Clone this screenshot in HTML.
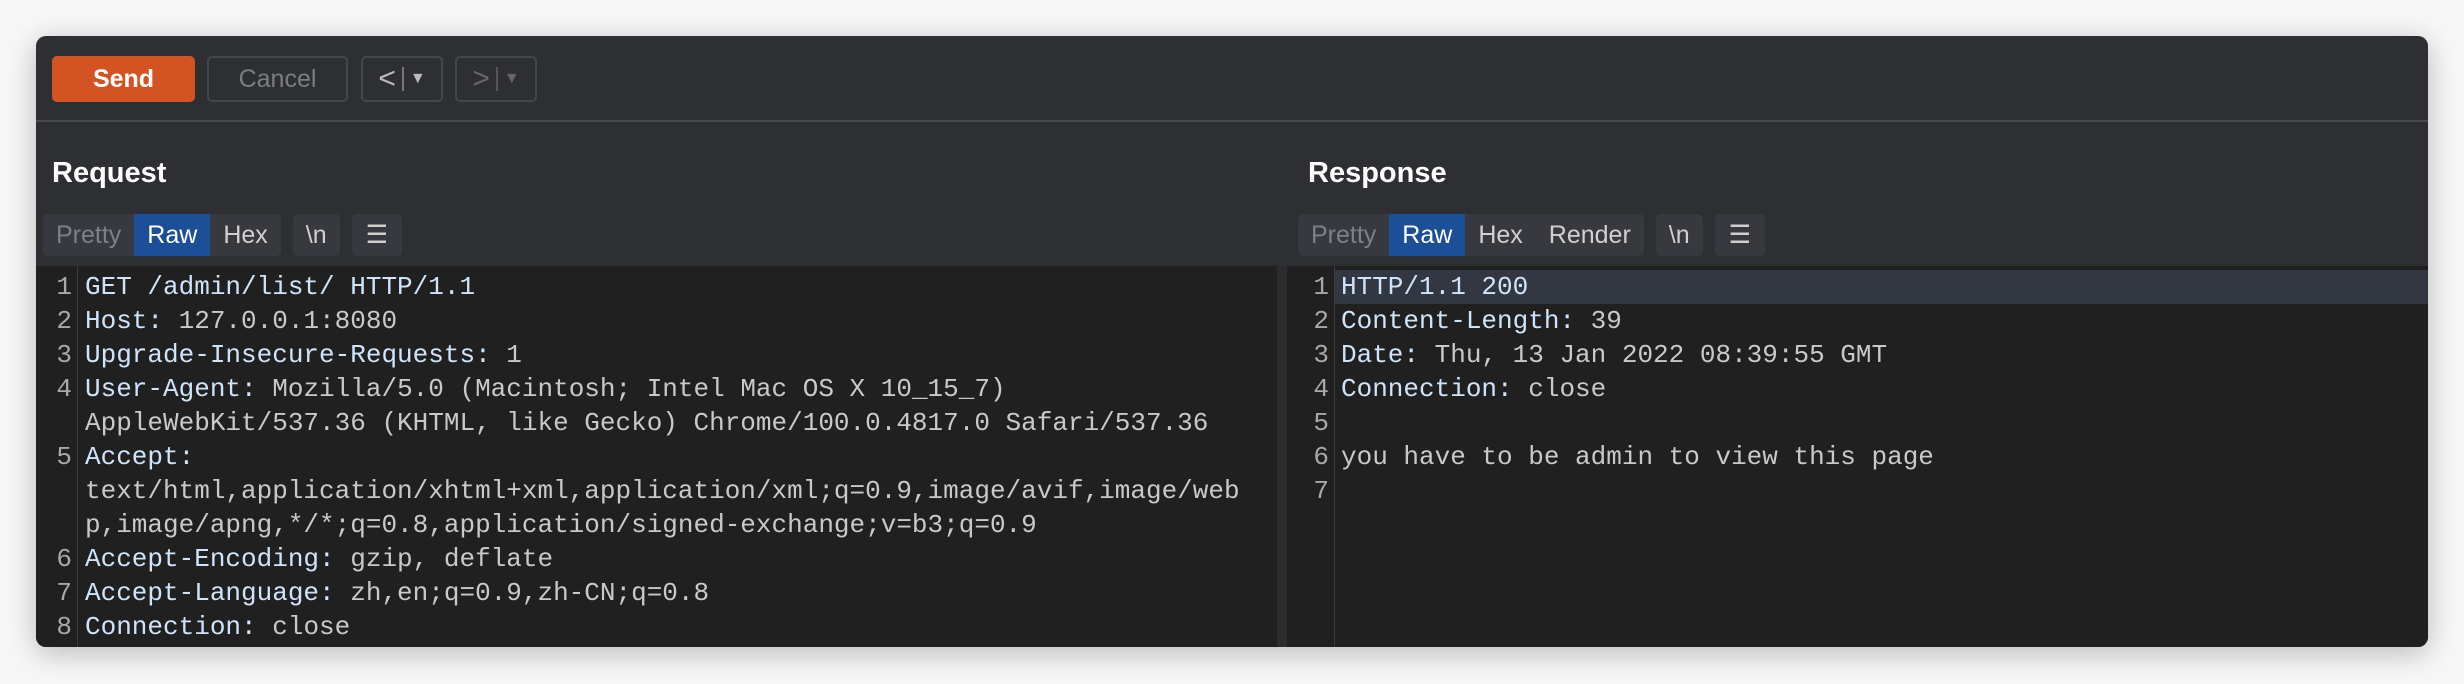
<!DOCTYPE html>
<html><head><meta charset="utf-8"><style>
*{margin:0;padding:0;box-sizing:border-box}
body{width:2464px;height:684px;background:#f7f7f7;position:relative;overflow:hidden;font-family:"Liberation Sans",sans-serif}
.win{position:absolute;left:36px;top:36px;width:2392px;height:611px;background:#2e2f33;border-radius:10px;overflow:hidden;box-shadow:0 6px 30px rgba(0,0,0,.25)}
.abs{position:absolute}
.btn{position:absolute;top:20px;height:46px;border-radius:5px;border:2px solid #45474c;color:#7b7d82;font-size:25px;display:flex;align-items:center;justify-content:center}
.send{background:#d35322;border:none;color:#fff;font-weight:bold}
.title{position:absolute;top:121px;font-size:29px;font-weight:bold;color:#fff}
.tabs{position:absolute;top:178px;height:42px;display:flex;gap:0}
.tg{background:#38393e;border-radius:5px;display:flex;height:42px;margin-right:12px}
.t{font-size:25px;color:#d0d0d0;padding:0 13px;line-height:42px}
.t.dim{color:#7e8085}
.t.on{background:#1d4f98;color:#fff}
.ed{position:absolute;top:230px;background:#202020;height:381px}
.code{position:absolute;font-family:"Liberation Mono",monospace;font-size:26px;line-height:34px;white-space:pre;color:#c9c9c9}
.k{color:#cfe4fa}
.num{position:absolute;font-family:"Liberation Mono",monospace;font-size:26px;line-height:34px;color:#a8a8a8;text-align:right;white-space:pre}
</style></head><body>
<div class="win">
<div class="btn send" style="left:16px;width:143px">Send</div>
<div class="btn" style="left:171px;width:141px">Cancel</div>
<div class="btn" style="left:325px;width:82px;color:#bbb"><span style="font-size:30px">&lt;</span><span style="width:2px;height:24px;background:#777;margin:0 6px"></span><span style="font-size:16px">▼</span></div>
<div class="btn" style="left:419px;width:82px;color:#666"><span style="font-size:30px">&gt;</span><span style="width:2px;height:24px;background:#555;margin:0 6px"></span><span style="font-size:16px">▼</span></div>
<div class="abs" style="left:0;top:84px;width:100%;height:2px;background:#47484c"></div>

<div class="title" style="left:16px">Request</div>
<div class="title" style="left:1272px">Response</div>
<div class="tabs" style="left:7px">
<div class="tg"><div class="t dim">Pretty</div><div class="t on">Raw</div><div class="t">Hex</div></div>
<div class="tg"><div class="t">\n</div></div>
<div class="tg"><div class="t" style="padding:0 14px">☰</div></div>
</div>
<div class="tabs" style="left:1262px">
<div class="tg"><div class="t dim">Pretty</div><div class="t on">Raw</div><div class="t">Hex</div><div class="t">Render</div></div>
<div class="tg"><div class="t">\n</div></div>
<div class="tg"><div class="t" style="padding:0 14px">☰</div></div>
</div>

<div class="ed" style="left:0;width:1241px"></div>
<div class="abs" style="left:1241px;top:230px;width:10px;height:381px;background:#2b2c30"></div>
<div class="ed" style="left:1251px;width:1141px"></div>
<div class="abs" style="left:41px;top:230px;width:1px;height:381px;background:#3c3c3c"></div>
<div class="abs" style="left:1298px;top:230px;width:1px;height:381px;background:#3c3c3c"></div>
<div class="abs" style="left:1299px;top:234px;width:1093px;height:34px;background:#333741"></div>

<div class="num" style="left:8px;top:234px;width:28px">1
2
3
4

5


6
7
8</div>
<div class="code" style="left:49px;top:234px"><span class="k">GET /admin/list/ HTTP/1.1</span>
<span class="k">Host:</span> 127.0.0.1:8080
<span class="k">Upgrade-Insecure-Requests:</span> 1
<span class="k">User-Agent:</span> Mozilla/5.0 (Macintosh; Intel Mac OS X 10_15_7)
AppleWebKit/537.36 (KHTML, like Gecko) Chrome/100.0.4817.0 Safari/537.36
<span class="k">Accept:</span>
text/html,application/xhtml+xml,application/xml;q=0.9,image/avif,image/web
p,image/apng,*/*;q=0.8,application/signed-exchange;v=b3;q=0.9
<span class="k">Accept-Encoding:</span> gzip, deflate
<span class="k">Accept-Language:</span> zh,en;q=0.9,zh-CN;q=0.8
<span class="k">Connection:</span> close</div>

<div class="num" style="left:1265px;top:234px;width:28px">1
2
3
4
5
6
7</div>
<div class="code" style="left:1305px;top:234px"><span class="k">HTTP/1.1 200</span>
<span class="k">Content-Length:</span> 39
<span class="k">Date:</span> Thu, 13 Jan 2022 08:39:55 GMT
<span class="k">Connection:</span> close

you have to be admin to view this page
</div>
</div>
</body></html>
